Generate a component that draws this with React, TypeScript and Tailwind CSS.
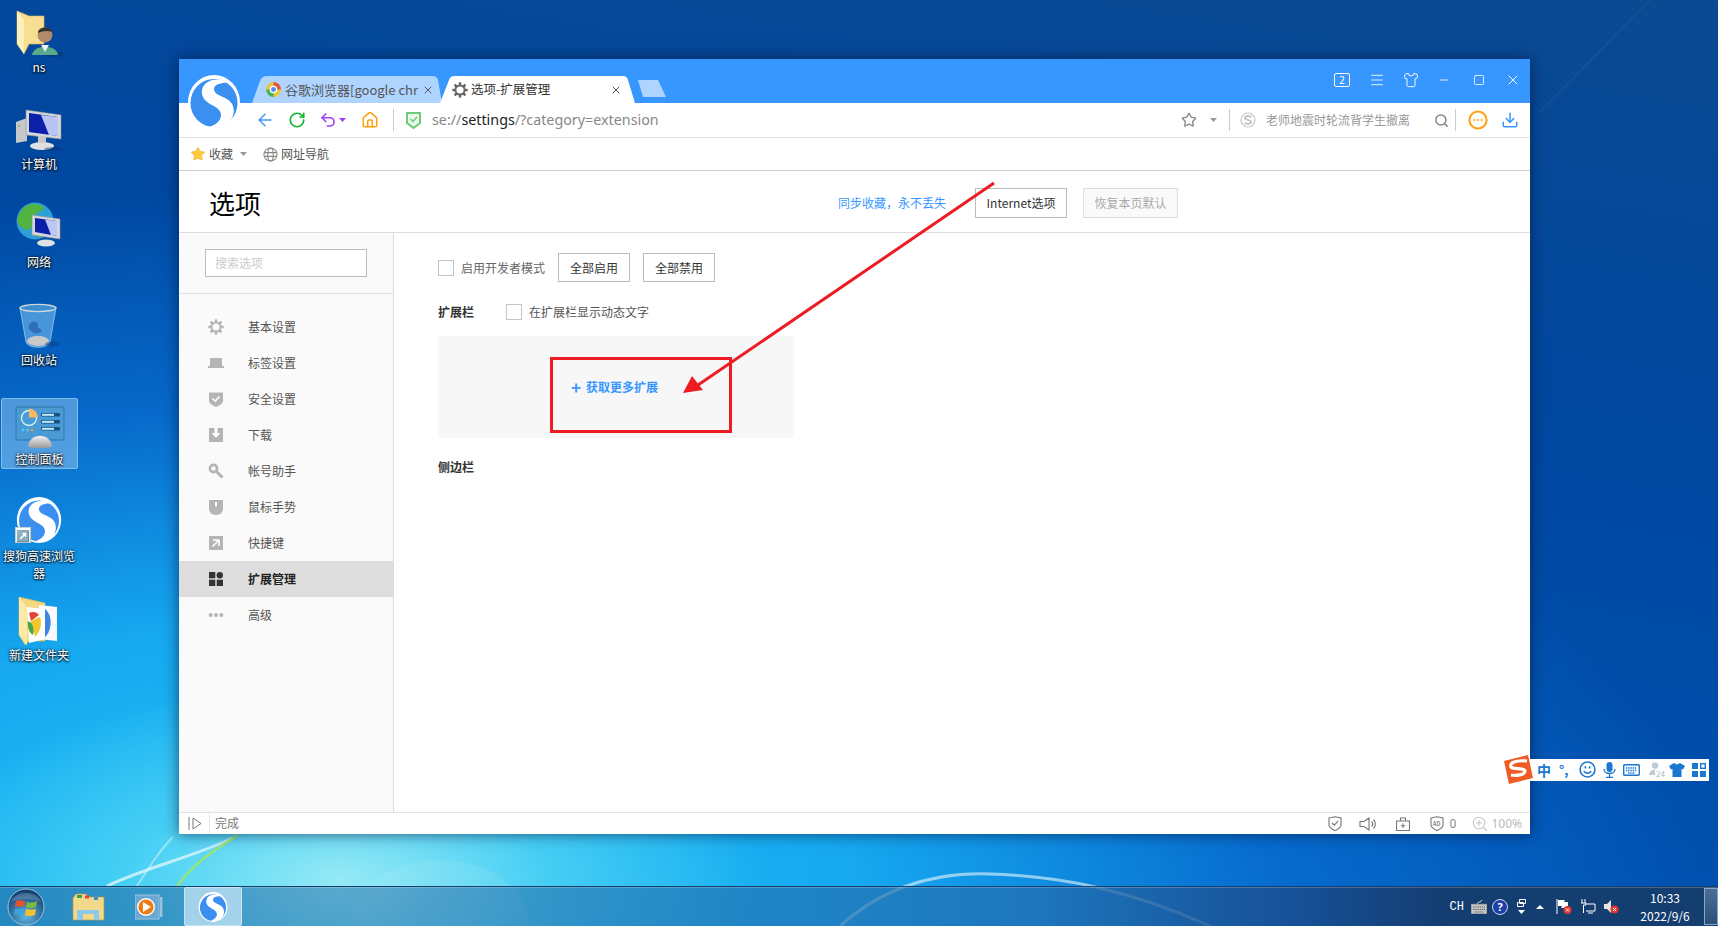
import { ArrowLeft, Download, House, Menu, Minus, RotateCw, Search, Shirt, Square, Star, Undo2, X } from "lucide-react";
import type { ReactNode } from "react";

const cjk = "font-['Noto_Sans_CJK_SC','Noto_Sans',sans-serif]";

const SogouLogo = ({ size }: { size: number }) => (
  <svg width={size} height={size} viewBox="0 0 54 54">
    <ellipse cx="27" cy="27" rx="26" ry="27" fill="#fff" />
    <ellipse cx="27" cy="28" rx="23.5" ry="24" fill="#3a8ff0" />
    <path d="M43 8C30 0 13 6 15 19C17 31 35 30 34 41C33 47 28 50 22 52C38 55 50 44 46 31C43 21 27 22 27 14C27 9 36 7 43 8Z" fill="#fff" />
  </svg>
);

const GearIcon = ({ size, color }: { size: number; color: string }) => (
  <svg width={size} height={size} viewBox="0 0 16 16">
    <circle cx="8" cy="8" r="4.6" fill="none" stroke={color} strokeWidth="2" />
    {[0, 45, 90, 135, 180, 225, 270, 315].map((a) => (
      <rect key={a} x="6.8" y="0.3" width="2.4" height="3" fill={color} transform={`rotate(${a} 8 8)`} />
    ))}
  </svg>
);

const FolderPerson = () => (
  <svg width="48" height="50" viewBox="0 0 48 50">
    <path d="M2 3L14 8L29 8V36L14 36L9 46L2 36Z" fill="#f7de92" stroke="#d9b65a" strokeWidth="0.6" />
    <path d="M2 3L9 12V46L2 36Z" fill="#fdf0b8" />
    <ellipse cx="40" cy="46" rx="11" ry="3" fill="#0a3070" opacity="0.5" />
    <circle cx="30" cy="27" r="7.5" fill="#b08a6a" />
    <path d="M23 25C23 18 37 18 37 24C33 22 27 23 23 25Z" fill="#333" />
    <path d="M17 47C18 36 42 36 43 47Z" fill="#5aa98a" />
    <path d="M26 37L30 44L34 37Z" fill="#eef" />
  </svg>
);

const ComputerIcon = () => (
  <svg width="48" height="48" viewBox="0 0 48 48">
    <path d="M1 15L12 11V34L1 36Z" fill="#c6c8cb" />
    <circle cx="4" cy="19" r="1" fill="#4fc05a" />
    <path d="M11 3L46 8V32L11 28Z" fill="#d5d7da" stroke="#8d9299" strokeWidth="0.6" />
    <path d="M14 6L43 10V29L14 25Z" fill="#0b1fa8" />
    <path d="M26 8L43 10V29L34 28Z" fill="#b9c4f5" />
    <ellipse cx="27" cy="39" rx="12" ry="4" fill="#dfe1e3" />
    <path d="M23 29H31V36H23Z" fill="#c6c8cb" />
    <ellipse cx="38" cy="42" rx="9" ry="2" fill="#0a3070" opacity="0.4" />
  </svg>
);

const NetworkIcon = () => (
  <svg width="48" height="50" viewBox="0 0 48 50">
    <circle cx="20" cy="20" r="18.5" fill="#2f9fd8" />
    <path d="M9 6C15 2 24 2 29 6C27 12 22 10 19 15C16 20 20 24 15 28C9 30 3 25 2 18C4 13 6 9 9 6Z" fill="#52b340" />
    <path d="M22 26C27 25 27 32 24 36C21 38 19 31 22 26Z" fill="#4ba83e" />
    <path d="M17 14L45 18V38L17 34Z" fill="#d5d7da" stroke="#8d9299" strokeWidth="0.6" />
    <path d="M20 17L42 20V35L20 31Z" fill="#0b1fa8" />
    <path d="M30 18.5L42 20V35L36 34Z" fill="#bcc7f5" />
    <ellipse cx="31" cy="42" rx="9" ry="3.5" fill="#dfe1e3" />
  </svg>
);

const RecycleIcon = () => (
  <svg width="42" height="48" viewBox="0 0 42 48">
    <path d="M2 6L8 40C10 47 30 47 32 40L38 6Z" fill="#6cb5ea" fillOpacity="0.65" stroke="#a9d3ee" strokeWidth="0.7" />
    <ellipse cx="20" cy="6" rx="18" ry="3.6" fill="#3b8fd0" stroke="#cfd6da" strokeWidth="1.4" />
    <path d="M14 20C18 18 21 22 20 26C24 26 25 30 21 31C17 32 12 30 11 26C10 24 12 21 14 20Z" fill="#2f6fb8" />
    <ellipse cx="20" cy="39" rx="11" ry="5" fill="#c9c9c9" />
    <ellipse cx="34" cy="42" rx="7" ry="2.4" fill="#0a3070" opacity="0.4" />
  </svg>
);

const ControlPanelIcon = () => (
  <svg width="50" height="42" viewBox="0 0 50 42">
    <defs>
      <linearGradient id="dome" x1="0" y1="0" x2="0" y2="1">
        <stop offset="0" stopColor="#f2f2f2" />
        <stop offset="1" stopColor="#9a9a9a" />
      </linearGradient>
    </defs>
    <rect x="1" y="1" width="48" height="33" rx="1" fill="#4a9ad6" stroke="#2b6d9f" strokeWidth="0.8" />
    <circle cx="14" cy="12" r="7.5" fill="none" stroke="#d8f2fc" strokeWidth="1.3" />
    <path d="M14 2.5A9 9 0 0 1 23 11.5H14Z" fill="#f6b860" />
    <circle cx="8" cy="24" r="1.3" fill="#4fd3f0" />
    <circle cx="12.5" cy="24" r="1.3" fill="#4fd3f0" />
    <circle cx="17" cy="24" r="1.3" fill="#f39a3a" />
    {[7, 14, 21].map((y) => (
      <g key={y}>
        <rect x="26" y={y} width="19" height="3.6" rx="1" fill="#17507e" />
        <rect x="27" y={y + 0.8} width="12" height="2" fill="#bfeeff" />
      </g>
    ))}
    <path d="M13 41C14 26 36 26 37 41C30 42.5 20 42.5 13 41Z" fill="url(#dome)" />
  </svg>
);

const ChromeFolder = () => (
  <svg width="44" height="52" viewBox="0 0 44 52">
    <path d="M2 2L28 8V46L12 46L8 50L2 40Z" fill="#f5d77f" stroke="#d9b65a" strokeWidth="0.6" />
    <path d="M22 10L40 12V46L22 44Z" fill="#f7f9fc" />
    <path d="M10 12L28 14V44L12 48Z" fill="#fff" />
    <path d="M28 14C36 20 35 36 28 42Z" fill="#3f86e0" />
    <path d="M12 18C16 16 20 17 22 20L14 26Z" fill="#e04434" />
    <path d="M11 26C10 32 12 38 16 40L18 30Z" fill="#4aa64a" />
    <path d="M14 26L23 22C25 28 24 36 18 42L16 32Z" fill="#f5c52e" />
    <path d="M2 2L10 12V50L2 40Z" fill="#fbe9a6" />
  </svg>
);

const DesktopLabel = ({ children }: { children: ReactNode }) => (
  <div className={`${cjk} text-center text-xs leading-[17px] text-white [text-shadow:0_1px_2px_#000,0_0_3px_#000]`}>{children}</div>
);

// shields and small sidebar glyphs
const SideIcon = ({ name, dark }: { name: string; dark?: boolean }) => {
  const c = dark ? "#333333" : "#b4b4b4";
  if (name === "gear") return <GearIcon size={16} color={c} />;
  return (
    <svg width="16" height="16" viewBox="0 0 16 16">
      {name === "tab" && <path d="M2 3H14V11H16V13H0V11H2Z" fill={c} />}
      {name === "shield" && (
        <>
          <path d="M1 1.5H15V10C15 13 10 15 8 16C6 15 1 13 1 10Z" fill={c} />
          <path d="M4.5 7.5L7.2 10L11.5 5.5" fill="none" stroke="#fff" strokeWidth="1.7" />
        </>
      )}
      {name === "down" && (
        <>
          <rect x="1" y="1" width="14" height="14" fill={c} />
          <path d="M6.5 1H9.5V6H12.5L8 11L3.5 6H6.5Z" fill="#fff" />
        </>
      )}
      {name === "key" && (
        <>
          <circle cx="5.5" cy="5.5" r="3.6" fill="none" stroke={c} strokeWidth="2.6" />
          <path d="M8.5 8.5L14.5 14.5" stroke={c} strokeWidth="3" />
        </>
      )}
      {name === "mouse" && (
        <>
          <path d="M1 1H15V10C15 13 12 16 8 16C4 16 1 13 1 10Z" fill={c} />
          <rect x="7" y="3" width="2" height="4.5" fill="#fff" />
        </>
      )}
      {name === "key2" && (
        <>
          <rect x="1" y="1" width="14" height="14" fill={c} />
          <path d="M5 5H11V11M11 5L4.5 11.5" fill="none" stroke="#fff" strokeWidth="1.6" />
        </>
      )}
      {name === "grid" && (
        <>
          <rect x="1" y="1" width="6.3" height="6.3" fill={c} />
          <circle cx="11.8" cy="4.2" r="3.2" fill={c} />
          <rect x="1" y="8.7" width="6.3" height="6.3" fill={c} />
          <rect x="8.7" y="8.7" width="6.3" height="6.3" fill={c} />
        </>
      )}
      {name === "more" && (
        <>
          <circle cx="2.6" cy="8" r="2" fill={c} />
          <circle cx="8" cy="8" r="2" fill={c} />
          <circle cx="13.4" cy="8" r="2" fill={c} />
        </>
      )}
    </svg>
  );
};

const sideItems = [
  { icon: "gear", label: "基本设置" },
  { icon: "tab", label: "标签设置" },
  { icon: "shield", label: "安全设置" },
  { icon: "down", label: "下载" },
  { icon: "key", label: "帐号助手" },
  { icon: "mouse", label: "鼠标手势" },
  { icon: "key2", label: "快捷键" },
  { icon: "grid", label: "扩展管理", active: true },
  { icon: "more", label: "高级" },
];

const Checkbox = () => <span className="h-4 w-4 shrink-0 border border-[#c4c4c4] bg-white" />;

const OutlineBtn = ({ children }: { children: ReactNode }) => (
  <button className="flex h-[29px] w-[72px] items-center justify-center border border-[#bbbbbb] bg-white text-xs text-[#333]">{children}</button>
);

const Caret = ({ color = "#999" }: { color?: string }) => (
  <svg width="7" height="4" viewBox="0 0 7 4"><path d="M0 0H7L3.5 4Z" fill={color} /></svg>
);

const BrowserWindow = () => (
  <div className={`${cjk} absolute left-[179px] top-[59px] flex h-[775px] w-[1351px] flex-col bg-white shadow-[0_0_14px_rgba(0,20,60,0.65)]`}>
    {/* title band + tabs */}
    <div className="relative flex h-[44px] shrink-0 items-end bg-[#3797ff] pl-[73px]">
      <div className="relative flex h-[27px] w-[190px] items-center bg-[#aed4ff] pl-[14px] pr-[10px] [clip-path:path('M0_27L8_5Q10_0_15_0H180Q185_0_186_4L190_27Z')]">
        <svg width="15" height="15" viewBox="0 0 16 16" className="shrink-0">
          <circle cx="8" cy="8" r="8" fill="#e6c93a" />
          <path d="M8 0A8 8 0 0 1 16 8H8Z" fill="#e2574c" />
          <path d="M0 8A8 8 0 0 0 8 16V8Z" fill="#45b35c" />
          <circle cx="8" cy="8" r="4" fill="#fff" />
          <circle cx="8" cy="8" r="2.6" fill="#4b8ef0" />
        </svg>
        <span className="ml-1 w-[132px] whitespace-nowrap text-[13px] text-[#555]">谷歌浏览器[google chr</span>
        <X size={12} className="ml-[5px] shrink-0 text-[#555]" />
      </div>
      <div className="relative -ml-[2px] flex h-[27px] w-[195px] items-center bg-white pl-[12px] pr-[10px] [clip-path:path('M0_27L9_4Q10_0_15_0H183Q187_0_188_4L195_27Z')]">
        <GearIcon size={16} color="#666" />
        <span className="ml-[3px] w-[139px] whitespace-nowrap text-[12.5px] text-[#333]">选项-扩展管理</span>
        <X size={12} className="shrink-0 text-[#555]" />
      </div>
      <div className="mb-[6px] ml-[3px] h-[17px] w-[28px] bg-[#aed4ff] [clip-path:polygon(0_0,20px_0,28px_100%,5px_100%)]" />
      <div className="absolute right-[9px] top-[13px] flex items-center text-white">
        <span className="flex h-[14px] w-[16px] items-center justify-center rounded-[2px] border border-white text-[10px] leading-none">2</span>
        <Menu size={16} strokeWidth={1.3} className="ml-[19px]" />
        <Shirt size={16} strokeWidth={1.4} className="ml-[18px]" />
        <Minus size={14} strokeWidth={1.4} className="ml-[18px]" />
        <Square size={12} strokeWidth={1.6} className="ml-[22px]" />
        <X size={16} strokeWidth={1.4} className="ml-[20px]" />
      </div>
    </div>
    <div className="absolute left-[8px] top-[16px] z-10">
      <SogouLogo size={54} />
    </div>

    {/* address bar */}
    <div className="flex h-[35px] shrink-0 items-center border-b border-[#e2e2e2] pl-[76px] pr-[11px]">
      <ArrowLeft size={20} strokeWidth={1.7} className="text-[#3a96ff]" />
      <RotateCw size={18} strokeWidth={2.2} className="ml-[13px] text-[#0eb52e]" />
      <Undo2 size={18} strokeWidth={2.2} className="ml-[13px] text-[#a040f0]" />
      <span className="ml-[2px]"><Caret color="#a040f0" /></span>
      <House size={18} strokeWidth={2} className="ml-[15px] text-[#ff9f10]" />
      <span className="ml-[14px] h-[22px] w-px bg-[#cccccc]" />
      <svg width="15" height="17" viewBox="0 0 15 17" className="ml-[12px]">
        <path d="M1 1H14V11L7.5 16L1 11Z" fill="#e8f8ea" stroke="#6ecb7a" strokeWidth="2" />
        <path d="M4.5 7L7 9.5L11 5" fill="none" stroke="#6ecb7a" strokeWidth="1.5" />
      </svg>
      <span className="ml-[11px] font-['Noto_Sans',sans-serif] text-[14.3px] text-[#888]">
        se://<span className="text-[#222]">settings</span>/?category=extension
      </span>
      <Star size={16} strokeWidth={2} className="ml-auto text-[#888]" />
      <span className="ml-[13px]"><Caret /></span>
      <span className="ml-[12px] h-[22px] w-px bg-[#cccccc]" />
      <svg width="16" height="16" viewBox="0 0 16 16" className="ml-[10px]">
        <circle cx="8" cy="8" r="7" fill="none" stroke="#c8c8c8" strokeWidth="1.2" />
        <path d="M11.5 5C9 3.5 5 4 5 6C5 8.5 11 7.5 11 10C11 12 7 12.5 4.5 11" fill="none" stroke="#c0c0c0" strokeWidth="1.8" />
      </svg>
      <span className="ml-[10px] w-[144px] whitespace-nowrap text-xs text-[#999]">老师地震时轮流背学生撤离</span>
      <Search size={15} strokeWidth={2.4} className="ml-[24px] text-[#888]" />
      <span className="ml-[6px] h-[22px] w-px bg-[#cccccc]" />
      <svg width="20" height="20" viewBox="0 0 20 20" className="ml-[12px]">
        <circle cx="10" cy="10" r="8.6" fill="none" stroke="#ff9f10" strokeWidth="2" />
        <circle cx="6.4" cy="10" r="1" fill="#ff9f10" />
        <circle cx="10" cy="10" r="1" fill="#ff9f10" />
        <circle cx="13.6" cy="10" r="1" fill="#ff9f10" />
      </svg>
      <Download size={18} strokeWidth={2} className="ml-[13px] text-[#3a96ff]" />
    </div>

    {/* bookmarks */}
    <div className="flex h-[33px] shrink-0 items-center border-b border-[#cccccc] pl-[11px] text-xs text-[#555]">
      <Star size={16} fill="#ffc83d" strokeWidth={1} className="text-[#f0b030]" />
      <span className="ml-[3px]">收藏</span>
      <span className="ml-[7px]"><Caret /></span>
      <svg width="15" height="15" viewBox="0 0 16 16" className="ml-[16px]" fill="none" stroke="#888" strokeWidth="1.1">
        <circle cx="8" cy="8" r="7" />
        <ellipse cx="8" cy="8" rx="3" ry="7" />
        <path d="M1 6H15M1 10H15" />
      </svg>
      <span className="ml-[3px]">网址导航</span>
    </div>

    {/* page header */}
    <div className="flex h-[62px] shrink-0 items-center border-b border-[#dddddd] pt-[2px]">
      <h1 className="ml-[30px] text-[26px] text-black">选项</h1>
      <span className="ml-[577px] w-[137px] whitespace-nowrap text-xs text-[#3797ff]">同步收藏，永不丢失</span>
      <button className="flex h-[30px] w-[92px] items-center justify-center border border-[#bbbbbb] text-xs text-[#333]">Internet选项</button>
      <button className="ml-[16px] flex h-[30px] w-[95px] items-center justify-center border border-[#dddddd] bg-[#fafafa] text-xs text-[#aaaaaa]">恢复本页默认</button>
    </div>

    <div className="flex min-h-0 flex-1">
      {/* sidebar */}
      <aside className="flex w-[215px] shrink-0 flex-col border-r border-[#dddddd] bg-[#fafafa]">
        <div className="h-[61px] border-b border-[#e2e2e2] pl-[26px] pt-[16px]">
          <div className="flex h-[28px] w-[162px] items-center border border-[#bbbbbb] bg-white pl-[9px] text-xs text-[#cccccc]">搜索选项</div>
        </div>
        <nav className="pt-[15px]">
          {sideItems.map((item) => (
            <div key={item.label} className={`flex h-9 items-center pb-px pl-[29px] text-xs ${item.active ? "bg-[#dddddd] font-bold text-[#222]" : "text-[#555]"}`}>
              <SideIcon name={item.icon} dark={item.active} />
              <span className="ml-[24px]">{item.label}</span>
            </div>
          ))}
        </nav>
      </aside>

      {/* extension content */}
      <main className="flex-1 pl-[44px] pt-[20px] text-xs">
        <div className="flex items-center">
          <Checkbox />
          <span className="ml-[7px] w-[84px] text-[#666]">启用开发者模式</span>
          <span className="ml-[13px]"><OutlineBtn>全部启用</OutlineBtn></span>
          <span className="ml-[13px]"><OutlineBtn>全部禁用</OutlineBtn></span>
        </div>
        <div className="mt-[22px] flex items-center">
          <span className="w-[68px] font-bold text-[#333]">扩展栏</span>
          <Checkbox />
          <span className="ml-[7px] text-[#555]">在扩展栏显示动态文字</span>
        </div>
        <div className="mt-[16px] flex h-[102px] w-[356px] items-center bg-[#f7f7f7] pl-[133px] font-bold text-[#3797ff]">
          <span className="-mt-[2px] text-[17px] leading-none">+</span>
          <span className="ml-[5px]">获取更多扩展</span>
        </div>
        <div className="mt-[21px] font-bold text-[#333]">侧边栏</div>
      </main>
    </div>

    {/* status bar */}
    <div className="flex h-[22px] shrink-0 items-center border-t border-[#e2e2e2] text-xs text-[#777]">
      <svg width="14" height="13" viewBox="0 0 14 13" className="ml-[9px]" fill="none" stroke="#777" strokeWidth="1">
        <path d="M1 0V13M5 1L13 6.5L5 12Z" />
      </svg>
      <span className="ml-[7px] h-full w-px bg-[#e5e5e5]" />
      <span className="mb-px ml-[5px]">完成</span>
      <div className="ml-auto mr-[8px] flex items-center">
        <svg width="14" height="15" viewBox="0 0 14 15" fill="none" stroke="#777" strokeWidth="1.1">
          <path d="M1 2L7 .8L13 2V9C13 12 9 13.5 7 14.5C5 13.5 1 12 1 9Z" />
          <path d="M4 7L6.3 9.2L10 5.2" />
        </svg>
        <svg width="18" height="14" viewBox="0 0 18 14" fill="none" stroke="#777" strokeWidth="1.1" className="ml-[17px]">
          <path d="M1 4.5H5L10 1V13L5 9.5H1ZM12.5 4.5C14 6 14 8 12.5 9.5M14.5 2.5C17 5 17 9 14.5 11.5" />
        </svg>
        <svg width="14" height="14" viewBox="0 0 14 14" fill="none" stroke="#777" strokeWidth="1.1" className="ml-[19px]">
          <path d="M.5 4H13.5V13.5H.5ZM4.5 4V1H9.5V4M7 6.5V11M4.8 8.8H9.2" />
        </svg>
        <span className="relative ml-[20px] flex h-[15px] w-[14px] items-center justify-center">
          <svg width="14" height="15" viewBox="0 0 14 15" fill="none" stroke="#777" strokeWidth="1.1" className="absolute inset-0">
            <path d="M1 2L7 .8L13 2V9C13 12 9 13.5 7 14.5C5 13.5 1 12 1 9Z" />
          </svg>
          <span className="text-[6px] leading-none text-[#555]">AD</span>
        </span>
        <span className="ml-[6px] font-['Noto_Sans',sans-serif] text-xs text-[#888]">0</span>
        <svg width="16" height="16" viewBox="0 0 16 16" fill="none" stroke="#c8c8c8" strokeWidth="1.1" className="ml-[16px]">
          <circle cx="7" cy="7" r="5.8" />
          <path d="M11 11L15 15M7 4V10M4 7H10" />
        </svg>
        <span className="ml-[3px] font-['Noto_Sans',sans-serif] text-xs text-[#bbbbbb]">100%</span>
      </div>
    </div>
  </div>
);

const Annotation = () => (
  <svg className="pointer-events-none absolute inset-0 z-20" width="1718" height="886">
    <rect x="551.5" y="358.5" width="179" height="73" fill="none" stroke="#ed1c24" strokeWidth="3" />
    <path d="M994 183L698 385" stroke="#ed1c24" strokeWidth="3" />
    <path d="M683 393L692 376L703 390Z" fill="#ed1c24" />
  </svg>
);

const ImeBar = () => (
  <div className="absolute left-[1503px] top-[755px] z-20 flex items-center">
    <svg width="30" height="29" viewBox="0 0 30 29" className="relative z-10">
      <path d="M1 6L25 0L30 23L6 29Z" fill="#f15a22" />
      <path d="M24 6C15 5 6 7 8 12C10 15 21 12 22 16C22 20 13 21 8 20" fill="none" stroke="#fff" strokeWidth="3.2" />
    </svg>
    <div className={`-ml-[4px] flex h-[22px] w-[180px] items-center bg-white pl-[8px] ${cjk} text-sm font-bold leading-none text-[#1a77d2]`}>
      <span className="w-[14px]">中</span>
      <span className="ml-[8px] w-[14px] text-[13px]">°,</span>
      <svg width="17" height="17" viewBox="0 0 16 16" fill="none" stroke="#1a77d2" strokeWidth="1.5" className="ml-[6px]"><circle cx="8" cy="8" r="7" /><path d="M4.5 9.5C6 12 10 12 11.5 9.5M6 5V7M10 5V7" /></svg>
      <svg width="13" height="16" viewBox="0 0 13 16" className="ml-[7px]"><rect x="3.5" y="0" width="6" height="10" rx="3" fill="#1a77d2" /><path d="M1 7C1 13 12 13 12 7M6.5 12V15M3 15.5H10" fill="none" stroke="#1a77d2" strokeWidth="1.3" /></svg>
      <svg width="17" height="12" viewBox="0 0 17 12" className="ml-[7px]"><rect x=".7" y=".7" width="15.6" height="10.6" rx="1" fill="none" stroke="#1a77d2" strokeWidth="1.4" /><path d="M3 4H14M3 6.5H14M5 9H12" stroke="#1a77d2" strokeWidth="1.3" strokeDasharray="1.4 .8" /></svg>
      <span className="relative ml-[8px] h-[16px] w-[18px]">
        <svg width="14" height="14" viewBox="0 0 14 14" className="absolute left-0 top-0"><circle cx="7" cy="3.5" r="3.2" fill="#bccbd8" /><path d="M1 13C1 6 13 6 13 13Z" fill="#bccbd8" /></svg>
        <span className="absolute bottom-0 right-0 bg-white px-px text-[8px] font-normal leading-none text-[#a9bccc]">24</span>
      </span>
      <svg width="16" height="14" viewBox="0 0 16 14" className="ml-[3px]"><path d="M5 0L8 1.5L11 0L16 3L14 6.5L12.5 6V14H3.5V6L2 6.5L0 3Z" fill="#1a77d2" /></svg>
      <svg width="14" height="14" viewBox="0 0 14 14" fill="#1a77d2" className="ml-[7px]"><rect width="6" height="6" /><rect x="8.7" y=".7" width="4.6" height="4.6" fill="none" stroke="#1a77d2" strokeWidth="1.4" /><rect y="8" width="6" height="6" /><rect x="8" y="8" width="6" height="6" /></svg>
    </div>
  </div>
);

const Taskbar = () => (
  <div className="relative z-10 flex h-[40px] shrink-0 items-center border-t border-[#173f6b] bg-[linear-gradient(90deg,rgba(30,90,150,0.55)_0%,rgba(35,105,165,0.5)_20%,rgba(35,110,175,0.72)_60%,rgba(25,75,140,0.85)_76%,rgba(20,60,110,0.97)_84%,#143d70_100%)] shadow-[inset_0_1px_0_rgba(255,255,255,0.2)]">
    <svg width="38" height="38" viewBox="0 0 38 38" className="ml-[7px]">
      <defs>
        <radialGradient id="orb" cx="0.5" cy="0.75" r="0.7">
          <stop offset="0" stopColor="#5fb8e8" />
          <stop offset="1" stopColor="#123f70" />
        </radialGradient>
      </defs>
      <circle cx="19" cy="19" r="18" fill="url(#orb)" stroke="#9cc0d8" strokeWidth="1" />
      <path d="M9 13C12 12 15 12 18 13.5L17 19C15 18 12 18 8 19Z" fill="#e5532e" />
      <path d="M20 14C23 15 26 15 30 13L29 19C26 20.5 23 20.5 19 19Z" fill="#7fbb3a" />
      <path d="M8 21C12 20 15 20 17 21L16 27C14 26 11 26 7 27Z" fill="#3aa3e0" />
      <path d="M19 21C23 22 26 22 29 21L28 27C25 28.5 22 28.5 18 27Z" fill="#f5c22e" />
      <path d="M4 14C8 2 30 2 34 14C26 10 12 10 4 14Z" fill="#fff" opacity="0.18" />
    </svg>
    <svg width="34" height="28" viewBox="0 0 34 28" className="ml-[27px]">
      <path d="M1 5L4 1H14L16 4H32V27H1Z" fill="#f3d98a" stroke="#b99a48" strokeWidth="0.7" />
      <rect x="5" y="2" width="5" height="3" fill="#35a845" />
      <rect x="13" y="2.5" width="4" height="3" fill="#e2453c" />
      <rect x="22" y="4" width="4" height="3" fill="#2f8fe0" />
      <path d="M5 17H27V27H22V21H11V27H5Z" fill="#8cc8ec" />
    </svg>
    <svg width="28" height="26" viewBox="0 0 28 26" className="ml-[29px]">
      <rect x="0" y="1" width="24" height="24" fill="#6aa8d2" stroke="#9cc4df" />
      <rect x="25" y="3" width="2.4" height="20" fill="#9cc4df" />
      <circle cx="11" cy="13" r="9" fill="#fff" />
      <circle cx="11" cy="13" r="7.6" fill="#ee7a12" />
      <path d="M8 8L16 13L8 18Z" fill="#fff" />
    </svg>
    <div className="ml-[21px] flex h-[39px] w-[58px] items-center justify-center rounded-[2px] border border-[#c8e4f2] bg-[#a3d3ea]">
      <SogouLogo size={30} />
    </div>
    <div className="ml-auto flex h-full items-center font-['Noto_Sans',sans-serif] text-white">
      <span className="font-['Liberation_Mono',monospace] text-xs">CH</span>
      <svg width="16" height="14" viewBox="0 0 16 14" className="ml-[7px]"><path d="M11 0C10 3 7 1 6 4" fill="none" stroke="#d8d8d8" /><rect x="0" y="4" width="16" height="10" fill="#c4c4c4" stroke="#666" strokeWidth=".6" /><path d="M2 7H14M2 9.5H14M4 12H12" stroke="#666" strokeWidth="1" strokeDasharray="1.4 .8" /></svg>
      <span className="ml-[5px] flex h-4 w-4 items-center justify-center rounded-full border border-[#cfd8e8] bg-[#1e3fa6] text-[11px] font-bold leading-none">?</span>
      <span className="ml-[9px] flex flex-col items-center">
        <svg width="9" height="8" viewBox="0 0 9 8" fill="none" stroke="#fff"><path d="M2.5 .5H8.5V4.5H2.5ZM.5 3.5H6.5V7.5H.5Z" /></svg>
        <span className="mt-[3px]"><Caret color="#fff" /></span>
      </span>
      <span className="ml-[10px]"><svg width="8" height="4" viewBox="0 0 8 4"><path d="M4 0L8 4H0Z" fill="#fff" /></svg></span>
      <svg width="16" height="15" viewBox="0 0 16 15" className="ml-[12px]"><path d="M1 0V15" stroke="#fff" /><path d="M2 1H9L8 3H12V9H5L6 7H2Z" fill="#fff" /><circle cx="11.5" cy="11" r="4" fill="#e03a30" /><path d="M10 9.5L13 12.5M13 9.5L10 12.5" stroke="#fff" /></svg>
      <svg width="16" height="15" viewBox="0 0 16 15" fill="none" stroke="#fff" className="ml-[8px]"><path d="M2 0V4M5 0V4M1 4H6V6H3.5V14M6 5H15V12H6M8 14H13" /></svg>
      <svg width="15" height="15" viewBox="0 0 15 15" className="ml-[8px]"><path d="M0 5H3L7 1V14L3 10H0Z" fill="#e6e6e6" /><circle cx="10.5" cy="10.5" r="4" fill="#e03a30" /><path d="M9 9L12 12M12 9L9 12" stroke="#fff" /></svg>
      <div className={`${cjk} ml-[8px] w-[76px] text-center text-xs leading-[18px]`}>
        <div>10:33</div>
        <div>2022/9/6</div>
      </div>
      <span className="ml-px h-[37px] w-[14px] border border-[#8aa6c4] bg-[linear-gradient(180deg,#4a7098,#2a5078)]" />
    </div>
  </div>
);

export default function App() {
  return (
    <div className="relative flex h-[926px] w-[1718px] flex-col overflow-hidden bg-[radial-gradient(ellipse_420px_200px_at_340px_880px,rgba(170,240,245,0.85)_0%,rgba(110,225,245,0.5)_50%,rgba(90,215,245,0)_100%),radial-gradient(ellipse_1400px_720px_at_300px_910px,#22c8f6_0%,#16a8f0_40%,rgba(10,120,220,0.65)_70%,rgba(10,100,200,0)_100%),linear-gradient(190deg,#0b4a92_0%,#00479f_35%,#0058bc_100%)]">
      {/* wallpaper streaks, they show through the taskbar too */}
      <svg className="absolute inset-0" width="1718" height="926">
        <path d="M107 886C150 866 190 858 233 838" fill="none" stroke="#e4f8fb" strokeWidth="3" opacity="0.75" />
        <path d="M137 886C150 866 160 850 173 837" fill="none" stroke="#e4f8fb" strokeWidth="2" opacity="0.5" />
        <path d="M177 886C195 862 215 850 238 835" fill="none" stroke="#a6e85a" strokeWidth="2.5" opacity="0.85" />
        <path d="M840 926C880 890 930 872 990 874C1060 876 1130 890 1210 926" fill="none" stroke="#e4f8fb" strokeWidth="3" opacity="0.6" />
        <path d="M1650 0L1540 112" stroke="#9cc6e8" strokeWidth="1" opacity="0.12" />
        <ellipse cx="440" cy="926" rx="90" ry="66" fill="#fff" opacity="0.08" />
      </svg>

      <div className="relative min-h-0 flex-1">
        <div className="absolute left-0 top-[8px] flex w-[78px] flex-col items-center"><FolderPerson /><DesktopLabel>ns</DesktopLabel></div>
        <div className="absolute left-0 top-[107px] flex w-[78px] flex-col items-center"><ComputerIcon /><DesktopLabel>计算机</DesktopLabel></div>
        <div className="absolute left-0 top-[201px] flex w-[78px] flex-col items-center"><NetworkIcon /><div className="mt-[2px]"><DesktopLabel>网络</DesktopLabel></div></div>
        <div className="absolute left-0 top-[302px] flex w-[78px] flex-col items-center"><RecycleIcon /><div className="mt-[1px]"><DesktopLabel>回收站</DesktopLabel></div></div>
        <div className="absolute left-[1px] top-[398px] flex h-[71px] w-[77px] flex-col items-center rounded-[2px] border border-[#7fc0ea] bg-[rgba(190,225,250,0.4)] pt-[7px]"><ControlPanelIcon /><div className="mt-[2px]"><DesktopLabel>控制面板</DesktopLabel></div></div>
        <div className="absolute left-0 top-[497px] flex w-[78px] flex-col items-center">
          <div className="relative">
            <SogouLogo size={46} />
            <span className="absolute -left-[1px] bottom-0 flex h-4 w-4 items-center justify-center border border-[#ccc] bg-white text-[11px] font-bold leading-none text-[#1c56a8]">↗</span>
          </div>
          <div className="mt-[4px]"><DesktopLabel>搜狗高速浏览器</DesktopLabel></div>
        </div>
        <div className="absolute left-0 top-[595px] flex w-[78px] flex-col items-center"><ChromeFolder /><div className="-mt-px"><DesktopLabel>新建文件夹</DesktopLabel></div></div>

        <BrowserWindow />
        <ImeBar />
        <Annotation />
      </div>
      <Taskbar />
    </div>
  );
}
